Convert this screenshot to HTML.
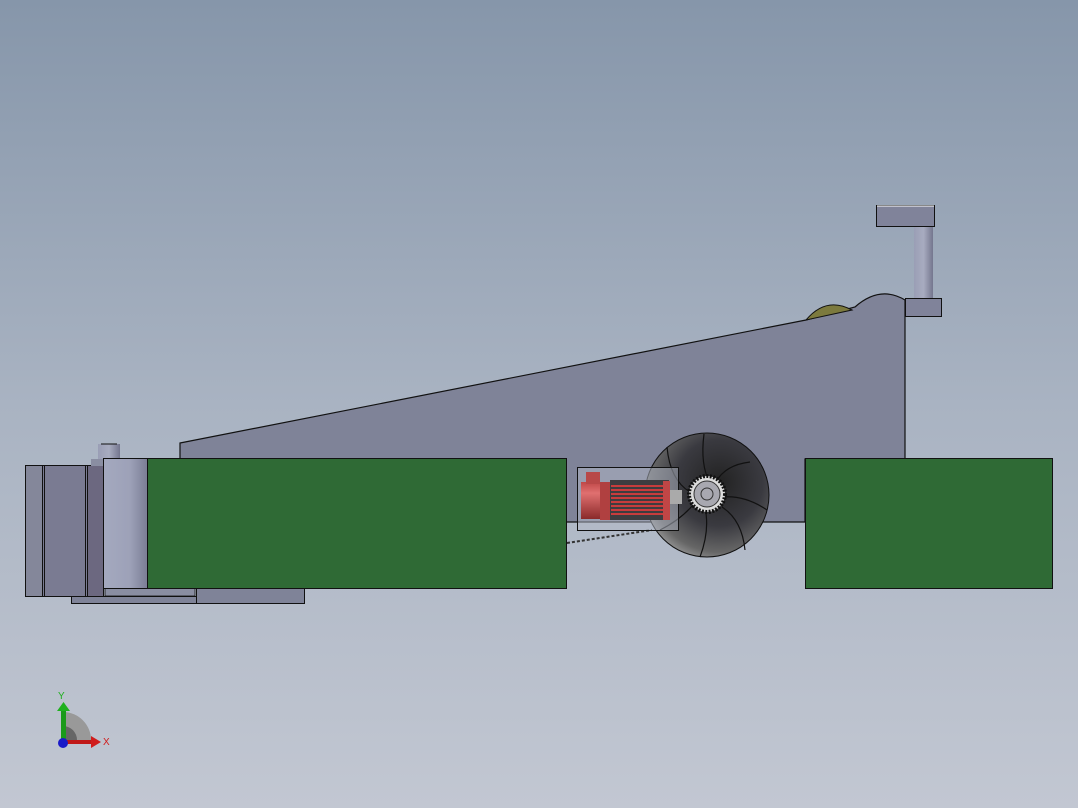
<!DOCTYPE html>
<html><head><style>html,body{margin:0;padding:0}body{width:1078px;height:808px;overflow:hidden;background:linear-gradient(#8696aa,#a9b3c2 50%,#c2c7d2)}</style></head><body>
<svg width="1078" height="808" viewBox="0 0 1078 808" style="position:absolute;left:0;top:0">
<defs>
<linearGradient id="cyl" x1="0" x2="1"><stop offset="0" stop-color="#a4a9bf"/><stop offset="0.6" stop-color="#9da1b8"/><stop offset="1" stop-color="#7b7d95"/></linearGradient>
<linearGradient id="col" x1="0" x2="1"><stop offset="0" stop-color="#9a9eb5"/><stop offset="0.5" stop-color="#a8acc0"/><stop offset="1" stop-color="#74768e"/></linearGradient>
<radialGradient id="fan" cx="0.6" cy="0.4" r="0.7"><stop offset="0" stop-color="#222"/><stop offset="0.5" stop-color="#3a3a40"/><stop offset="0.8" stop-color="#666"/><stop offset="1" stop-color="#aaa"/></radialGradient>
<linearGradient id="red" x1="0" y1="0" x2="0" y2="1"><stop offset="0" stop-color="#c04848"/><stop offset="0.3" stop-color="#e07070"/><stop offset="1" stop-color="#8a2a2a"/></linearGradient>
</defs>
<!-- plate -->
<path d="M180,443 L806,320 L855,307 Q880,285 905,300 L905,459 L805,459 L805,522 L566,522 L566,459 L180,459 Z" fill="#7f8398" stroke="#111" stroke-width="1.2"/>
<path d="M806,320 Q826,296 852,310 Z" fill="#7c7a3e" stroke="#111"/>
<!-- post -->
<rect x="914" y="226" width="19" height="72" fill="url(#col)"/>
<rect x="876.5" y="205.5" width="58" height="21" fill="#80839a" stroke="#111"/>
<line x1="877" y1="206" x2="934" y2="206" stroke="#fff"/>
<rect x="905.5" y="298.5" width="36" height="18" fill="#80839a" stroke="#111"/>
<!-- left blocks -->
<rect x="25.5" y="465.5" width="78" height="131" fill="#7a7b92" stroke="#111"/>
<rect x="26" y="466" width="16" height="130" fill="#84879a"/>
<line x1="42.5" y1="466" x2="42.5" y2="596" stroke="#111"/><line x1="44.5" y1="466" x2="44.5" y2="596" stroke="#111"/>
<rect x="88" y="466" width="15" height="130" fill="#6c6880"/>
<line x1="85.5" y1="466" x2="85.5" y2="596" stroke="#111"/><line x1="87.5" y1="466" x2="87.5" y2="596" stroke="#111"/>
<rect x="71.5" y="596.5" width="125" height="7" fill="#7f8398" stroke="#111"/>
<rect x="196.5" y="588.5" width="108" height="15" fill="#7f8398" stroke="#111"/>
<rect x="105" y="588" width="90" height="8" fill="#8a8ea2" stroke="#111" stroke-width="0.8"/>
<rect x="91" y="459" width="14" height="7" fill="#8a8ea2"/>
<rect x="98" y="444" width="22" height="15" fill="url(#col)"/>
<line x1="101" y1="444" x2="117" y2="444" stroke="#111"/>
<rect x="103.5" y="458.5" width="44" height="130" fill="url(#cyl)" stroke="#111"/>
<!-- green -->
<rect x="147.5" y="458.5" width="419" height="130" fill="#2f6a35" stroke="#111"/>
<rect x="805.5" y="458.5" width="247" height="130" fill="#2f6a35" stroke="#111"/>
<!-- chain -->
<path d="M567,543 L652,530" stroke="#333" stroke-width="2" stroke-dasharray="3,2"/>
<!-- fan -->
<circle cx="707" cy="495" r="62" fill="url(#fan)" stroke="#111"/>
<g stroke="#111" stroke-width="1.2" fill="none">
<path d="M667,447 Q670,480 690,492"/><path d="M704,434 Q700,465 710,483"/><path d="M750,462 Q725,465 716,482"/>
<path d="M767,510 Q745,495 722,497"/><path d="M745,550 Q742,520 722,507"/><path d="M700,557 Q710,530 705,508"/>
<path d="M660,530 Q680,520 693,505"/>
</g>
<circle cx="707" cy="494" r="18" fill="#ddd" stroke="#111" stroke-dasharray="2,1.5" stroke-width="4"/>
<circle cx="707" cy="494" r="13" fill="#a8a8b0" stroke="#333"/>
<circle cx="707" cy="494" r="6" fill="none" stroke="#333"/>
<!-- motor -->
<rect x="577.5" y="467.5" width="101" height="63" fill="rgba(180,185,200,0.5)" stroke="#111"/>
<rect x="581" y="482" width="19" height="37" fill="url(#red)"/>
<rect x="586" y="472" width="14" height="12" fill="#b84848"/>
<rect x="600" y="482" width="11" height="38" fill="#b04040"/>
<rect x="610" y="480" width="59" height="40" fill="#3d3d40"/>
<g stroke="#c83c3c" stroke-width="2"><line x1="611" y1="486" x2="668" y2="486"/><line x1="611" y1="490" x2="668" y2="490"/><line x1="611" y1="494" x2="668" y2="494"/><line x1="611" y1="498" x2="668" y2="498"/><line x1="611" y1="502" x2="668" y2="502"/><line x1="611" y1="506" x2="668" y2="506"/><line x1="611" y1="510" x2="668" y2="510"/><line x1="611" y1="514" x2="668" y2="514"/></g>
<rect x="663" y="481" width="7" height="39" fill="#c04646"/>
<rect x="670" y="490" width="12" height="14" fill="#aaa"/>
<!-- triad -->
<path d="M63,740 L63,712 A28,28 0 0 1 91,740 Z" fill="#999"/>
<path d="M63,740 L63,726 A14,14 0 0 1 77,740 Z" fill="#666"/>
<rect x="61" y="709" width="5" height="31" fill="#1a9a1a"/>
<path d="M57,711 L63.5,702 L70,711 Z" fill="#1fb01f"/>
<rect x="63" y="740" width="30" height="4" fill="#c01818"/>
<path d="M91,736 L101,742 L91,748 Z" fill="#d01c1c"/>
<circle cx="63" cy="743" r="5" fill="#1a1ac8"/>
<text x="58" y="699" font-family="Liberation Sans,sans-serif" font-size="10" fill="#1fb01f">Y</text>
<text x="103" y="745" font-family="Liberation Sans,sans-serif" font-size="10" fill="#d01c1c">X</text>
</svg>
</body></html>
